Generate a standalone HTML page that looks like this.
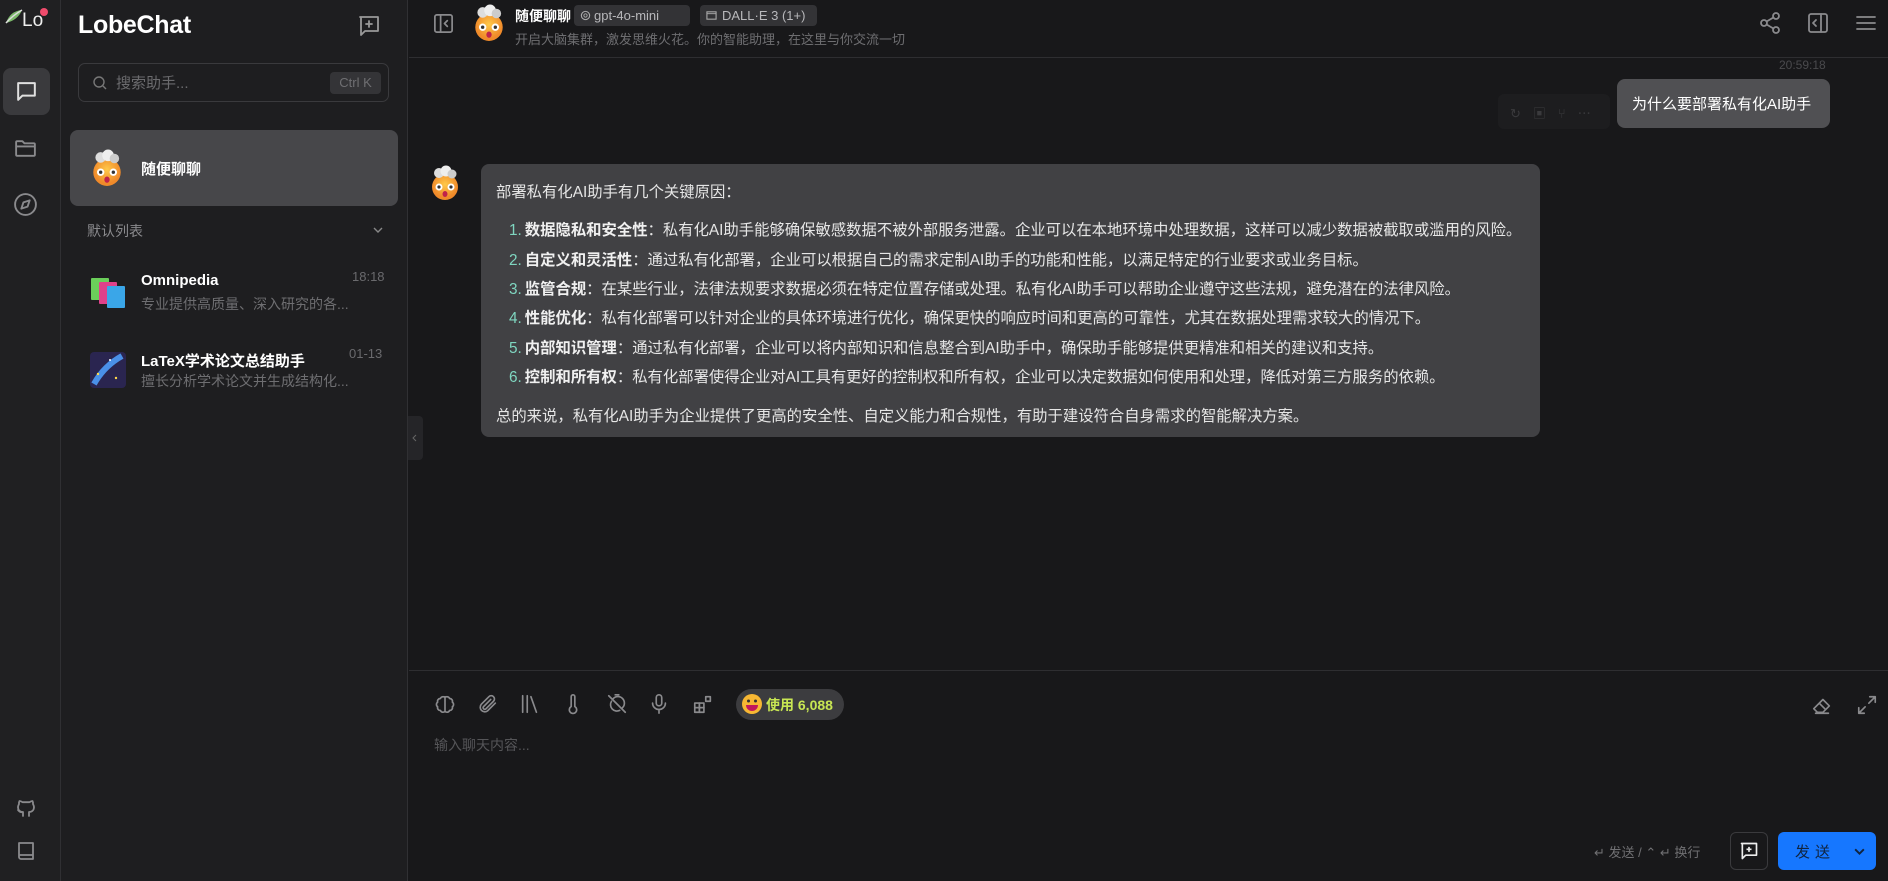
<!DOCTYPE html>
<html><head><meta charset="utf-8"><style>
*{box-sizing:border-box;margin:0;padding:0}
body{width:1888px;height:881px;overflow:hidden;background:#18181a;font-family:"Liberation Sans","Noto Sans CJK SC",sans-serif;color:#e8e8e8;position:relative}
.abs{position:absolute}
svg{display:block}
.ic{stroke:#8a8a8d;fill:none;stroke-width:1.8;stroke-linecap:round;stroke-linejoin:round}
.rail{left:0;top:0;width:61px;height:881px;background:#202022;border-right:1px solid #303033}
.side{left:61px;top:0;width:347px;height:881px;background:#1e1e20;border-right:1px solid #303033}
.t{white-space:nowrap}
.msg p{margin:0}
.li{position:absolute;left:16px;white-space:nowrap}
.li b{font-weight:700;color:#f0f0f0}
.li .n{color:#7fd6c0;margin-right:3px}
</style></head><body>

<div class="abs rail">
  <div class="abs" style="left:4px;top:8px;width:20px;height:16px">
    <svg width="20" height="16"><path d="M2 15 Q6 3 18 2 Q14 12 2 15Z" fill="#7bb86a"/><path d="M2 15 Q8 8 18 2" stroke="#ddd" stroke-width="1.5" fill="none"/></svg>
  </div>
  <div class="abs t" style="left:22px;top:10px;font-size:19px;color:#eee">Lo</div>
  <div class="abs" style="left:40px;top:8px;width:8px;height:8px;border-radius:50%;background:#ef4b6c"></div>
  <div class="abs" style="left:3px;top:68px;width:47px;height:47px;border-radius:8px;background:#3a3a3d"></div>
  <svg class="abs" style="left:14px;top:79px" width="25" height="25" viewBox="0 0 24 24"><path d="M4 4h16v12H8l-4 4z" stroke="#e0e0e0" fill="none" stroke-width="1.9" stroke-linejoin="round"/></svg>
  <svg class="abs" style="left:13px;top:136px" width="25" height="25" viewBox="0 0 24 24"><path class="ic" d="M3 6a1 1 0 0 1 1-1h5l2 2h9a1 1 0 0 1 1 1v10a1 1 0 0 1-1 1H4a1 1 0 0 1-1-1zM3 10h18"/></svg>
  <svg class="abs" style="left:13px;top:192px" width="25" height="25" viewBox="0 0 24 24"><circle class="ic" cx="12" cy="12" r="10"/><path class="ic" d="M16 8l-2 6-6 2 2-6z"/></svg>
  <svg class="abs" style="left:14px;top:795px" width="24" height="24" viewBox="0 0 24 24"><path class="ic" d="M9 21v-4c-3 0-5-2-5-5 0-1 .5-2 1-3-.2-1 0-2 .5-3 1 0 2 .5 3 1.2h7c1-.7 2-1.2 3-1.2.5 1 .7 2 .5 3 .5 1 1 2 1 3 0 3-2 5-5 5v4M9 17c-3 1-4-1-5-2"/></svg>
  <svg class="abs" style="left:14px;top:839px" width="24" height="24" viewBox="0 0 24 24"><path class="ic" d="M5 4h14v16H7a2 2 0 0 1-2-2zM5 16h14"/></svg>
</div>

<div class="abs side">
  <div class="abs t" style="left:17px;top:11px;font-size:25px;font-weight:700;color:#fff;letter-spacing:-0.3px">LobeChat</div>
  <svg class="abs" style="left:296px;top:14px" width="24" height="24" viewBox="0 0 24 24"><path class="ic" d="M3 3h18v14H8l-4 4V3zM12 7v6M9 10h6" style="stroke:#999"/></svg>
  <div class="abs" style="left:17px;top:63px;width:311px;height:39px;border:1px solid #3a3a3d;border-radius:7px"></div>
  <svg class="abs" style="left:31px;top:75px" width="16" height="16" viewBox="0 0 16 16"><circle cx="7" cy="7" r="5" stroke="#777" fill="none" stroke-width="1.4"/><path d="M11 11l3 3" stroke="#777" stroke-width="1.4"/></svg>
  <div class="abs t" style="left:55px;top:72px;font-size:15px;color:#6b6b6e">搜索助手...</div>
  <div class="abs t" style="left:269px;top:72px;width:51px;height:22px;border-radius:4px;background:#343437;font-size:13px;color:#6f6f72;text-align:center;line-height:22px">Ctrl K</div>

  <div class="abs" style="left:9px;top:130px;width:328px;height:76px;border-radius:8px;background:#47474a"></div>
  <svg class="abs" style="left:27px;top:149px" width="38" height="38" viewBox="0 0 36 36"><defs><radialGradient id="g1" cx="50%" cy="40%"><stop offset="0" stop-color="#ffc94a"/><stop offset="1" stop-color="#f08a2a"/></radialGradient></defs><circle cx="18" cy="22" r="13" fill="url(#g1)"/><circle cx="12" cy="8" r="5" fill="#ddd"/><circle cx="19" cy="6" r="5.5" fill="#eee"/><circle cx="25" cy="9" r="4.5" fill="#ccc"/><circle cx="12" cy="22" r="3.5" fill="#fff"/><circle cx="24" cy="22" r="3.5" fill="#fff"/><circle cx="12" cy="22" r="1.6" fill="#333"/><circle cx="24" cy="22" r="1.6" fill="#333"/><ellipse cx="18" cy="29" rx="2.5" ry="3" fill="#c0234a"/></svg>
  <div class="abs t" style="left:80px;top:158px;font-size:15px;font-weight:700;color:#fff">随便聊聊</div>

  <div class="abs t" style="left:26px;top:221px;font-size:14px;color:#8a8a8d">默认列表</div>
  <svg class="abs" style="left:311px;top:224px" width="12" height="12" viewBox="0 0 12 12"><path d="M2 4l4 4 4-4" stroke="#888" fill="none" stroke-width="1.4"/></svg>

  <svg class="abs" style="left:29px;top:277px" width="36" height="34" viewBox="0 0 36 34"><rect x="1" y="1" width="18" height="22" rx="1" fill="#6bcf5a"/><rect x="9" y="5" width="18" height="22" rx="1" fill="#e0418a"/><rect x="17" y="9" width="18" height="22" rx="1" fill="#3aa6e8"/></svg>
  <div class="abs t" style="left:80px;top:272px;font-size:15px;font-weight:700;color:#fff">Omnipedia</div>
  <div class="abs t" style="left:80px;top:294px;font-size:14px;color:#6e6e71">专业提供高质量、深入研究的各...</div>
  <div class="abs t" style="left:291px;top:269px;font-size:13px;color:#6a6a6d">18:18</div>

  <svg class="abs" style="left:29px;top:352px" width="36" height="36" viewBox="0 0 36 36"><rect width="36" height="36" rx="4" fill="#2a2550"/><path d="M4 32 Q14 14 32 4" stroke="#4a90e8" stroke-width="6" fill="none"/><circle cx="8" cy="22" r="1.2" fill="#ffd84a"/><circle cx="26" cy="26" r="1.2" fill="#ffd84a"/><circle cx="20" cy="8" r="1" fill="#fff"/></svg>
  <div class="abs t" style="left:80px;top:350px;font-size:15px;font-weight:700;color:#fff">LaTeX学术论文总结助手</div>
  <div class="abs t" style="left:80px;top:371px;font-size:14px;color:#6e6e71">擅长分析学术论文并生成结构化...</div>
  <div class="abs t" style="left:288px;top:346px;font-size:13px;color:#6a6a6d">01-13</div>
</div>
<div class="abs" style="left:408px;top:416px;width:15px;height:44px;background:#252528;border-radius:0 4px 4px 0"></div>
<svg class="abs" style="left:411px;top:434px" width="8" height="8" viewBox="0 0 8 8"><path d="M5 1L2 4l3 3" stroke="#666" fill="none"/></svg>

<!-- header -->
<div class="abs" style="left:409px;top:0;width:1479px;height:58px;border-bottom:1px solid #2e2e31"></div>
<svg class="abs" style="left:432px;top:12px" width="23" height="23" viewBox="0 0 24 24"><rect class="ic" x="3" y="3" width="18" height="18" rx="2"/><path class="ic" d="M9 3v18M16 9l-3 3 3 3"/></svg>
<svg class="abs" style="left:470px;top:4px" width="38" height="38" viewBox="0 0 36 36"><circle cx="18" cy="22" r="13" fill="url(#g1)"/><circle cx="12" cy="8" r="5" fill="#ddd"/><circle cx="19" cy="6" r="5.5" fill="#eee"/><circle cx="25" cy="9" r="4.5" fill="#ccc"/><circle cx="12" cy="22" r="3.5" fill="#fff"/><circle cx="24" cy="22" r="3.5" fill="#fff"/><circle cx="12" cy="22" r="1.6" fill="#333"/><circle cx="24" cy="22" r="1.6" fill="#333"/><ellipse cx="18" cy="29" rx="2.5" ry="3" fill="#c0234a"/></svg>
<div class="abs t" style="left:515px;top:6px;font-size:14px;font-weight:700;color:#fff">随便聊聊</div>
<div class="abs t" style="left:574px;top:5px;width:116px;height:21px;border-radius:4px;background:#333336;font-size:13px;color:#b8b8bb;line-height:21px;padding-left:20px">gpt-4o-mini</div>
<svg class="abs" style="left:580px;top:10px" width="11" height="11" viewBox="0 0 12 12"><circle cx="6" cy="6" r="4.5" stroke="#aaa" fill="none" stroke-width="1.2"/><circle cx="6" cy="6" r="1.8" stroke="#aaa" fill="none"/></svg>
<div class="abs t" style="left:700px;top:5px;width:117px;height:21px;border-radius:4px;background:#333336;font-size:13px;color:#b8b8bb;line-height:21px;padding-left:22px">DALL·E 3 (1+)</div>
<svg class="abs" style="left:706px;top:10px" width="11" height="11" viewBox="0 0 12 12"><rect x="1" y="2" width="10" height="8" stroke="#aaa" fill="none" stroke-width="1.2"/><path d="M1 4h10" stroke="#aaa"/></svg>
<div class="abs t" style="left:515px;top:29px;font-size:13px;color:#6e6e71">开启大脑集群，激发思维火花。你的智能助理，在这里与你交流一切</div>
<svg class="abs" style="left:1758px;top:11px" width="24" height="24" viewBox="0 0 24 24"><circle class="ic" cx="18" cy="5" r="3"/><circle class="ic" cx="6" cy="12" r="3"/><circle class="ic" cx="18" cy="19" r="3"/><path class="ic" d="M8.6 13.5l6.8 4M15.4 6.5l-6.8 4"/></svg>
<svg class="abs" style="left:1806px;top:11px" width="24" height="24" viewBox="0 0 24 24"><rect class="ic" x="3" y="3" width="18" height="18" rx="2"/><path class="ic" d="M15 3v18M10 9l-3 3 3 3"/></svg>
<svg class="abs" style="left:1854px;top:11px" width="24" height="24" viewBox="0 0 24 24"><path class="ic" d="M3 6h18M3 12h18M3 18h18"/></svg>

<!-- messages -->
<div class="abs t" style="left:1779px;top:58px;font-size:12px;color:#4a4a4d">20:59:18</div>
<div class="abs" style="left:1498px;top:94px;width:112px;height:35px;border-radius:6px;background:#1d1d1f"></div>
<div class="abs t" style="left:1510px;top:103px;font-size:13px;color:#3a3a3d;letter-spacing:12px">↻▣⑂⋯</div>
<div class="abs" style="left:1617px;top:79px;width:213px;height:49px;border-radius:8px;background:#505053"></div>
<div class="abs t" style="left:1632px;top:93px;font-size:15px;color:#fff">为什么要部署私有化AI助手</div>

<svg class="abs" style="left:427px;top:165px" width="36" height="36" viewBox="0 0 36 36"><circle cx="18" cy="22" r="13" fill="url(#g1)"/><circle cx="12" cy="8" r="5" fill="#ddd"/><circle cx="19" cy="6" r="5.5" fill="#eee"/><circle cx="25" cy="9" r="4.5" fill="#ccc"/><circle cx="12" cy="22" r="3.5" fill="#fff"/><circle cx="24" cy="22" r="3.5" fill="#fff"/><circle cx="12" cy="22" r="1.6" fill="#333"/><circle cx="24" cy="22" r="1.6" fill="#333"/><ellipse cx="18" cy="29" rx="2.5" ry="3" fill="#c0234a"/></svg>
<div class="abs msg" style="left:481px;top:164px;width:1059px;height:273px;border-radius:8px;background:#414144;font-size:15.35px;color:#e6e6e6">
  <div class="li" style="left:15px;top:16px">部署私有化AI助手有几个关键原因：</div>
  <div class="li" style="left:28px;top:54px"><span class="n">1.</span><b>数据隐私和安全性</b>：私有化AI助手能够确保敏感数据不被外部服务泄露。企业可以在本地环境中处理数据，这样可以减少数据被截取或滥用的风险。</div>
  <div class="li" style="left:28px;top:84px"><span class="n">2.</span><b>自定义和灵活性</b>：通过私有化部署，企业可以根据自己的需求定制AI助手的功能和性能，以满足特定的行业要求或业务目标。</div>
  <div class="li" style="left:28px;top:113px"><span class="n">3.</span><b>监管合规</b>：在某些行业，法律法规要求数据必须在特定位置存储或处理。私有化AI助手可以帮助企业遵守这些法规，避免潜在的法律风险。</div>
  <div class="li" style="left:28px;top:142px"><span class="n">4.</span><b>性能优化</b>：私有化部署可以针对企业的具体环境进行优化，确保更快的响应时间和更高的可靠性，尤其在数据处理需求较大的情况下。</div>
  <div class="li" style="left:28px;top:172px"><span class="n">5.</span><b>内部知识管理</b>：通过私有化部署，企业可以将内部知识和信息整合到AI助手中，确保助手能够提供更精准和相关的建议和支持。</div>
  <div class="li" style="left:28px;top:201px"><span class="n">6.</span><b>控制和所有权</b>：私有化部署使得企业对AI工具有更好的控制权和所有权，企业可以决定数据如何使用和处理，降低对第三方服务的依赖。</div>
  <div class="li" style="left:15px;top:240px">总的来说，私有化AI助手为企业提供了更高的安全性、自定义能力和合规性，有助于建设符合自身需求的智能解决方案。</div>
</div>

<!-- input -->
<div class="abs" style="left:409px;top:670px;width:1479px;height:1px;background:#2e2e31"></div>
<svg class="abs" style="left:434px;top:693px" width="22" height="22" viewBox="0 0 24 24"><path class="ic" d="M12 4v16M12 5a3 3 0 0 0-5 1 3 3 0 0 0-3 4 3 3 0 0 0 0 5 3 3 0 0 0 3 4 3 3 0 0 0 5 1M12 5a3 3 0 0 1 5 1 3 3 0 0 1 3 4 3 3 0 0 1 0 5 3 3 0 0 1-3 4 3 3 0 0 1-5 1"/></svg>
<svg class="abs" style="left:477px;top:693px" width="22" height="22" viewBox="0 0 24 24"><path class="ic" d="M20 11l-8.5 8.5a5 5 0 0 1-7-7L13 4a3.5 3.5 0 0 1 5 5l-8.5 8.5a1.8 1.8 0 0 1-2.5-2.5L15 7"/></svg>
<svg class="abs" style="left:519px;top:693px" width="22" height="22" viewBox="0 0 24 24"><path class="ic" d="M4 3v18M9 3v18M13 4l6 17"/></svg>
<svg class="abs" style="left:562px;top:693px" width="22" height="22" viewBox="0 0 24 24"><path class="ic" d="M14 14.8V4a2 2 0 0 0-4 0v10.8a4 4 0 1 0 4 0z"/></svg>
<svg class="abs" style="left:606px;top:693px" width="22" height="22" viewBox="0 0 24 24"><path class="ic" d="M3 3l18 18M8 6a7 7 0 0 1 10 10M6 9a7 7 0 0 0 9 10M10 2h4"/></svg>
<svg class="abs" style="left:648px;top:693px" width="22" height="22" viewBox="0 0 24 24"><rect class="ic" x="9" y="2" width="6" height="12" rx="3"/><path class="ic" d="M5 11a7 7 0 0 0 14 0M12 18v4"/></svg>
<svg class="abs" style="left:692px;top:693px" width="22" height="22" viewBox="0 0 24 24"><rect class="ic" x="3" y="11" width="5" height="5"/><rect class="ic" x="8" y="11" width="5" height="5"/><rect class="ic" x="3" y="16" width="5" height="5"/><rect class="ic" x="8" y="16" width="5" height="5"/><rect class="ic" x="15" y="4" width="5" height="5"/></svg>
<div class="abs" style="left:736px;top:689px;width:108px;height:31px;border-radius:16px;background:#3c3c3f"></div>
<svg class="abs" style="left:741px;top:693px" width="22" height="22" viewBox="0 0 22 22"><circle cx="11" cy="11" r="10" fill="#f7b733"/><circle cx="7.5" cy="8" r="1.5" fill="#333"/><circle cx="14.5" cy="8" r="1.5" fill="#333"/><path d="M5 12h12a6 6 0 0 1-12 0z" fill="#c2185b"/></svg>
<div class="abs t" style="left:766px;top:695px;font-size:14px;font-weight:700;color:#c8e653">使用 6,088</div>
<div class="abs t" style="left:434px;top:735px;font-size:14px;color:#555558">输入聊天内容...</div>
<svg class="abs" style="left:1811px;top:694px" width="22" height="22" viewBox="0 0 24 24"><path class="ic" d="M7 20l-4-4 10-10 7 7-7 7zM5 21h14M9 10l6 6"/></svg>
<svg class="abs" style="left:1856px;top:694px" width="22" height="22" viewBox="0 0 24 24"><path class="ic" d="M15 3h6v6M21 3l-7 7M9 21H3v-6M3 21l7-7"/></svg>
<div class="abs t" style="left:1594px;top:842px;font-size:13px;color:#707073">↵ 发送 / ⌃ ↵ 换行</div>
<div class="abs" style="left:1730px;top:832px;width:38px;height:38px;border-radius:6px;border:1px solid #3a3a3d"></div>
<svg class="abs" style="left:1739px;top:841px" width="20" height="20" viewBox="0 0 24 24"><path d="M3 3h18v14H8l-4 4V3zM12 7v6M9 10h6" stroke="#eee" fill="none" stroke-width="2" stroke-linejoin="round"/></svg>
<div class="abs" style="left:1778px;top:832px;width:98px;height:38px;border-radius:6px;background:#1677ff"></div>
<div class="abs t" style="left:1795px;top:841px;font-size:15px;color:#10243f;letter-spacing:5px">发送</div>
<svg class="abs" style="left:1853px;top:845px" width="13" height="13" viewBox="0 0 12 12"><path d="M2 4l4 4 4-4" stroke="#10243f" fill="none" stroke-width="1.8"/></svg>
</body></html>
